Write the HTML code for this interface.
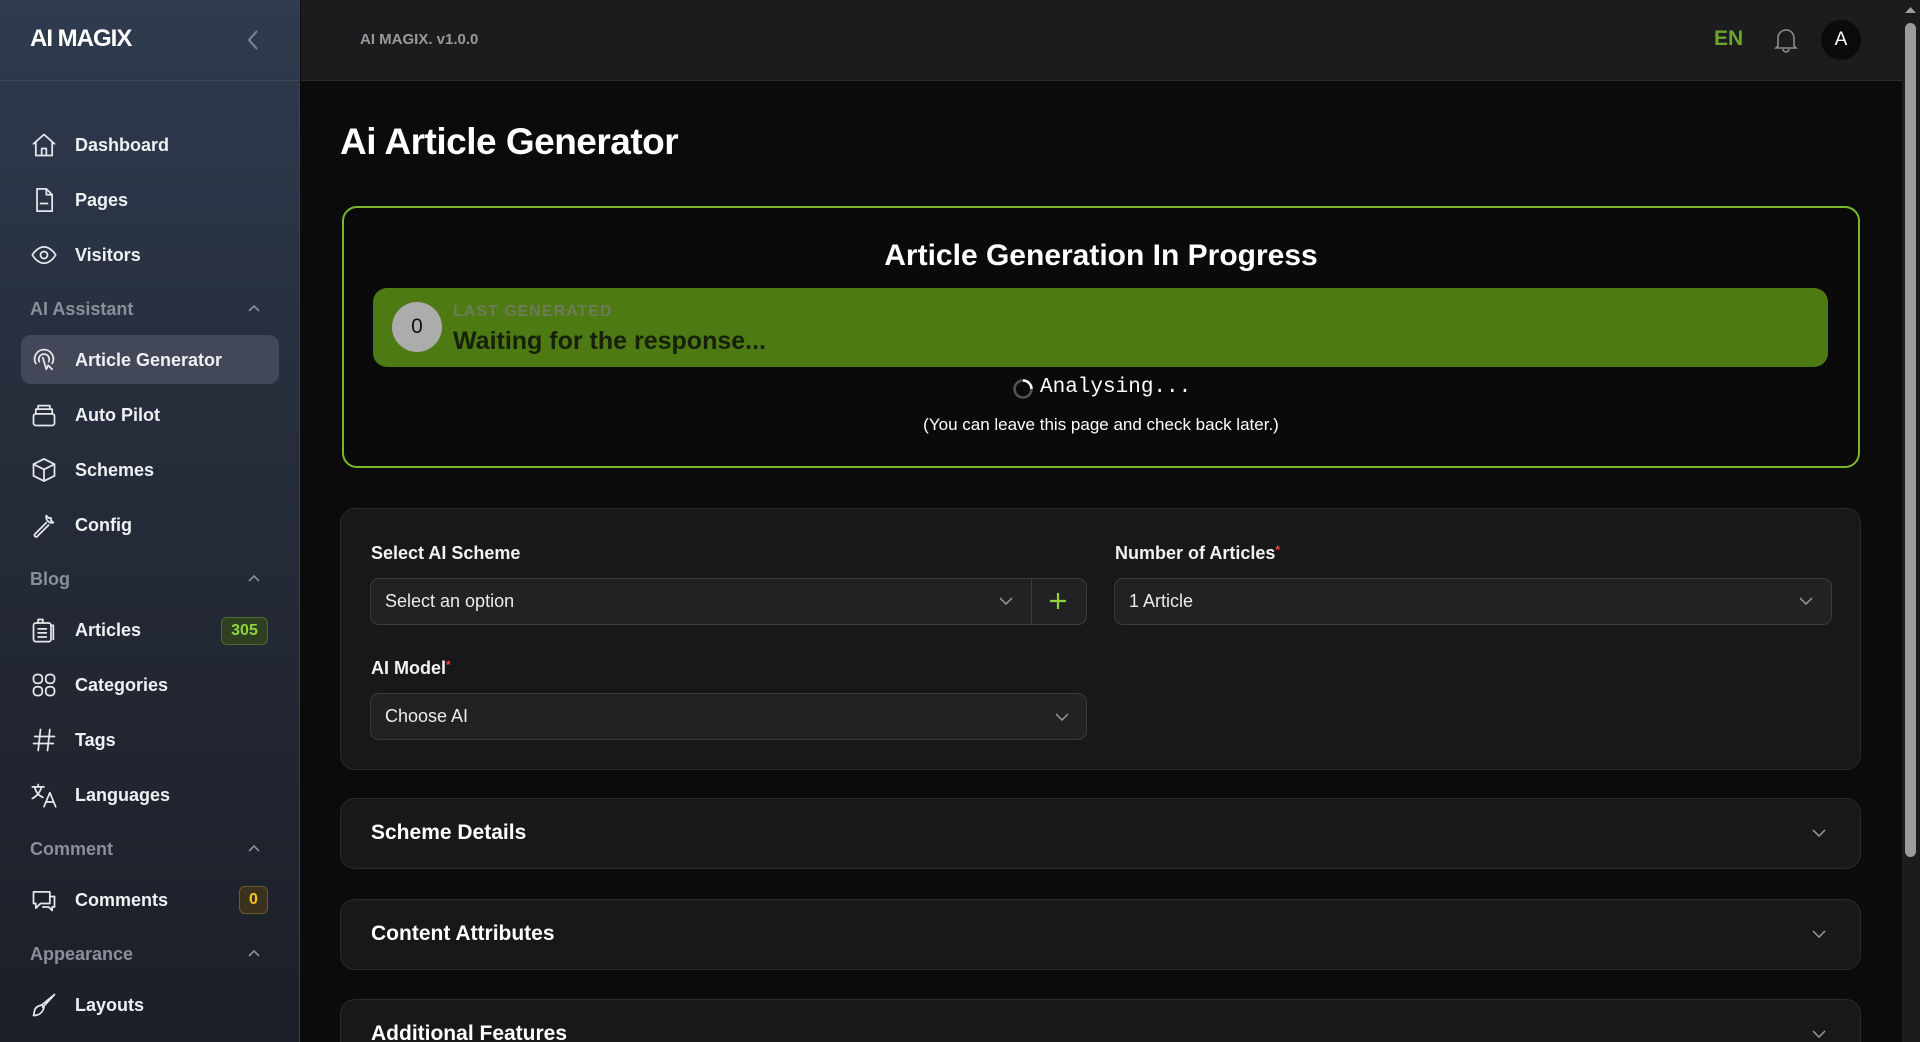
<!DOCTYPE html>
<html style="height:1042px;overflow:hidden"><head><meta charset="utf-8"><style>
*{box-sizing:border-box;margin:0;padding:0}
html,body{width:1920px;height:1042px;overflow:hidden}
body{background:#0b0b0c;font-family:"Liberation Sans",sans-serif;color:#fff;position:relative}
.sb{position:absolute;left:0;top:0;width:300px;height:1042px;background:linear-gradient(180deg,#303b4f 0%,#262d3b 40%,#1c1f27 100%);border-right:1px solid #3a4150}
.sbh{height:81px;border-bottom:1px solid #3f4758;position:relative}
.logo{position:absolute;left:30px;top:25px;font-size:24px;font-weight:bold;letter-spacing:-1px}
.it{position:absolute;left:30px;display:flex;align-items:center;font-size:18px;font-weight:bold;color:#eef0f3}
.it svg{width:28px;height:28px;margin-right:17px;stroke:#e5e7eb;fill:none;stroke-width:1.5;stroke-linecap:round;stroke-linejoin:round}
.sec{position:absolute;left:30px;font-size:18px;font-weight:bold;color:#8a909b}
.car{position:absolute;left:248px;width:12px;height:12px}
.act{position:absolute;left:21px;top:335px;width:258px;height:49px;background:#424857;border-radius:10px}
.badge{position:absolute;border-radius:6px;font-size:16px;font-weight:bold;text-align:center;line-height:26px}
.hdr{position:absolute;left:301px;top:0;width:1601px;height:81px;background:#1c1c1e;border-bottom:1px solid #2c2c2e}
.card{position:absolute;border-radius:15px}
.sel{position:absolute;height:47px;background:#222224;border:1px solid #3b3b3e;border-radius:9px;font-size:18px;color:#ececec;padding-left:14px;line-height:45px}
.chev{position:absolute;width:14px;height:8px}
.lbl{position:absolute;font-size:18px;font-weight:bold;color:#f2f2f2}
.acc{position:absolute;left:340px;width:1521px;height:71px;background:#18181a;border:1px solid #2a2a2c;border-radius:15px;overflow:hidden}
.acc span{position:absolute;left:30px;top:22px;font-size:21px;font-weight:bold}
.acc svg{position:absolute;right:34px;top:30px}
</style></head><body>
<div class="sb">
 <div class="sbh"><div class="logo">AI MAGIX</div>
 <svg style="position:absolute;left:246px;top:29px" width="14" height="22" viewBox="0 0 14 22"><path d="M11 2 L3 11 L11 20" stroke="#7d8594" stroke-width="2" fill="none"/></svg></div>
 <div class="act"></div>
 <div class="it" style="top:131px"><svg viewBox="0 0 24 24"><path d="M3 11 L12 3 L21 11 M5 9.5V21H19V9.5 M10 21v-6h4v6"/></svg>Dashboard</div>
 <div class="it" style="top:186px"><svg viewBox="0 0 24 24"><path d="M6 2.5h8l5 5V21.5H6z M14 2.5V7.5h5 M9 15h6"/></svg>Pages</div>
 <div class="it" style="top:241px"><svg viewBox="0 0 24 24"><path d="M2 12s4-7 10-7 10 7 10 7-4 7-10 7S2 12 2 12z"/><circle cx="12" cy="12" r="3"/></svg>Visitors</div>
 <div class="sec" style="top:299px">AI Assistant</div>
 <svg class="car" style="top:303px" viewBox="0 0 12 12"><path d="M1 8 L6 3 L11 8" stroke="#8a909b" stroke-width="1.6" fill="none"/></svg>
 <div class="it" style="top:346px"><svg viewBox="0 0 24 24"><path d="M5 15a8 8 0 1 1 14 0 M8 13.5a4.5 4.5 0 1 1 8 0 M11 10l3 10 1.5-3.5 3.5 3.5"/></svg>Article Generator</div>
 <div class="it" style="top:401px"><svg viewBox="0 0 24 24"><rect x="3" y="11" width="18" height="10" rx="2"/><path d="M5 11V7h14v4 M7 7V4h10v3"/></svg>Auto Pilot</div>
 <div class="it" style="top:456px"><svg viewBox="0 0 24 24"><path d="M12 2.5 21 7v10l-9 4.5L3 17V7z M3 7l9 4.5L21 7 M12 11.5V21.5"/></svg>Schemes</div>
 <div class="it" style="top:511px"><svg viewBox="0 0 24 24"><path d="M14 4a5 5 0 0 0 6 6l-2-2v-2h-2z M14 10 4 20a1.5 1.5 0 0 0 2 2l10-10"/></svg>Config</div>
 <div class="sec" style="top:569px">Blog</div>
 <svg class="car" style="top:573px" viewBox="0 0 12 12"><path d="M1 8 L6 3 L11 8" stroke="#8a909b" stroke-width="1.6" fill="none"/></svg>
 <div class="it" style="top:616px"><svg viewBox="0 0 24 24"><rect x="3" y="6" width="15" height="16" rx="2"/><path d="M7 6V3h4v3 M7 11h7 M7 14.5h7 M7 18h7 M18 8h2v12"/></svg>Articles</div>
 <div class="badge" style="left:221px;top:617px;width:47px;background:#2f3f22;border:1px solid #4f6b2b;color:#8fd43a">305</div>
 <div class="it" style="top:671px"><svg viewBox="0 0 24 24"><rect x="3" y="3" width="7.5" height="7.5" rx="3"/><rect x="13.5" y="3" width="7.5" height="7.5" rx="3"/><rect x="3" y="13.5" width="7.5" height="7.5" rx="3"/><rect x="13.5" y="13.5" width="7.5" height="7.5" rx="3"/></svg>Categories</div>
 <div class="it" style="top:726px"><svg viewBox="0 0 24 24"><path d="M9 3 7 21 M17 3 15 21 M4 9h17 M3 15h17"/></svg>Tags</div>
 <div class="it" style="top:781px"><svg viewBox="0 0 24 24"><path d="M2 5h10 M7 3v2 M4 5c1 5 4 8 7 9 M10 5c-1 4-4 8-8 10 M12 22l5-12 5 12 M14 18h6"/></svg>Languages</div>
 <div class="sec" style="top:839px">Comment</div>
 <svg class="car" style="top:843px" viewBox="0 0 12 12"><path d="M1 8 L6 3 L11 8" stroke="#8a909b" stroke-width="1.6" fill="none"/></svg>
 <div class="it" style="top:886px"><svg viewBox="0 0 24 24"><path d="M3 5h14v10H9l-4 4v-4H3z M17 9h4v9h-2v3l-3-3h-5"/></svg>Comments</div>
 <div class="badge" style="left:239px;top:886px;width:29px;background:#3a321d;border:1px solid #6b5a24;color:#f5c518">0</div>
 <div class="sec" style="top:944px">Appearance</div>
 <svg class="car" style="top:948px" viewBox="0 0 12 12"><path d="M1 8 L6 3 L11 8" stroke="#8a909b" stroke-width="1.6" fill="none"/></svg>
 <div class="it" style="top:991px"><svg viewBox="0 0 24 24"><path d="M21 3 11 14 M21 3 10 12 M10 12l2 2c-1 4-4 7-9 7 1-2 0-6 4-8z"/></svg>Layouts</div>
</div>
<div class="hdr">
 <div style="position:absolute;left:59px;top:31px;font-size:15px;font-weight:bold;color:#9a9a9e">AI MAGIX. v1.0.0</div>
 <div style="position:absolute;left:1413px;top:27px;font-size:21px;font-weight:bold;color:#6aa62a">EN</div>
 <svg style="position:absolute;left:1473px;top:26px" width="24" height="28" viewBox="0 0 24 28"><path d="M4 20V12a8 8 0 0 1 16 0v8l2 2H2z M9 23a3 3 0 0 0 6 0" stroke="#8c8c90" stroke-width="1.6" fill="none"/></svg>
 <div style="position:absolute;left:1520px;top:20px;width:40px;height:40px;border-radius:50%;background:#0b0b0c;text-align:center;line-height:40px;font-size:19px">A</div>
</div>
<div style="position:absolute;left:1902px;top:0;width:18px;height:1042px;background:#1c1c1e"></div>
<div style="position:absolute;left:1905px;top:23px;width:11px;height:834px;background:#9c9c9c;border-radius:6px"></div>
<svg style="position:absolute;left:1905px;top:6px" width="11" height="8"><path d="M0 7 5.5 1 11 7z" fill="#9c9c9c"/></svg>

<div style="position:absolute;left:340px;top:121px;font-size:37px;font-weight:bold;letter-spacing:-0.5px">Ai Article Generator</div>

<div class="card" style="left:342px;top:206px;width:1518px;height:262px;border:2px solid #78b82a;background:#0a0a0b"></div>
<div style="position:absolute;left:342px;width:1518px;top:239px;text-align:center;font-size:30px;font-weight:bold">Article Generation In Progress</div>
<div style="position:absolute;left:373px;top:288px;width:1455px;height:79px;background:#4d7a12;border-radius:14px"></div>
<div style="position:absolute;left:392px;top:302px;width:50px;height:50px;border-radius:50%;background:#acacac;color:#111;text-align:center;line-height:50px;font-size:21px">0</div>
<div style="position:absolute;left:453px;top:303px;font-size:16px;font-weight:bold;color:#6e7a5a;letter-spacing:1px">LAST GENERATED</div>
<div style="position:absolute;left:453px;top:327px;font-size:25px;font-weight:bold;color:#16200a">Waiting for the response...</div>
<svg style="position:absolute;left:1012px;top:378px" width="22" height="22" viewBox="0 0 22 22"><circle cx="11" cy="11" r="8.5" stroke="#555" stroke-width="2.5" fill="none"/><path d="M11 2.5a8.5 8.5 0 0 1 8.5 8.5" stroke="#fff" stroke-width="2.5" fill="none"/></svg>
<div style="position:absolute;left:1040px;top:376px;font-family:'Liberation Mono',monospace;font-size:21px">Analysing...</div>
<div style="position:absolute;left:342px;width:1518px;top:415px;text-align:center;font-size:17px">(You can leave this page and check back later.)</div>

<div class="card" style="left:340px;top:508px;width:1521px;height:262px;background:#18181a;border:1px solid #2a2a2c"></div>
<div class="lbl" style="left:371px;top:543px">Select AI Scheme</div>
<div class="sel" style="left:370px;top:578px;width:717px">Select an option</div>
<div style="position:absolute;left:1031px;top:579px;width:1px;height:45px;background:#3b3b3e"></div>
<svg class="chev" style="left:999px;top:597px" viewBox="0 0 14 8"><path d="M1 1 7 7 13 1" stroke="#9a9a9e" stroke-width="1.5" fill="none"/></svg>
<svg style="position:absolute;left:1049px;top:592px" width="18" height="18"><path d="M9 1v16M1 9h16" stroke="#8fd43a" stroke-width="2.2"/></svg>
<div class="lbl" style="left:1115px;top:543px">Number of Articles<span style="color:#ef4444;font-size:12px;vertical-align:top">*</span></div>
<div class="sel" style="left:1114px;top:578px;width:718px">1 Article</div>
<svg class="chev" style="left:1799px;top:597px" viewBox="0 0 14 8"><path d="M1 1 7 7 13 1" stroke="#9a9a9e" stroke-width="1.5" fill="none"/></svg>
<div class="lbl" style="left:371px;top:658px">AI Model<span style="color:#ef4444;font-size:12px;vertical-align:top">*</span></div>
<div class="sel" style="left:370px;top:693px;width:717px">Choose AI</div>
<svg class="chev" style="left:1055px;top:713px" viewBox="0 0 14 8"><path d="M1 1 7 7 13 1" stroke="#9a9a9e" stroke-width="1.5" fill="none"/></svg>

<div class="acc" style="top:798px"><span>Scheme Details</span><svg width="14" height="8"><path d="M1 1 7 7 13 1" stroke="#9a9a9e" stroke-width="1.5" fill="none"/></svg></div>
<div class="acc" style="top:899px"><span>Content Attributes</span><svg width="14" height="8"><path d="M1 1 7 7 13 1" stroke="#9a9a9e" stroke-width="1.5" fill="none"/></svg></div>
<div class="acc" style="top:999px;height:43px;border-bottom:none;border-radius:15px 15px 0 0"><span>Additional Features</span><svg width="14" height="8"><path d="M1 1 7 7 13 1" stroke="#9a9a9e" stroke-width="1.5" fill="none"/></svg></div>
</body></html>
